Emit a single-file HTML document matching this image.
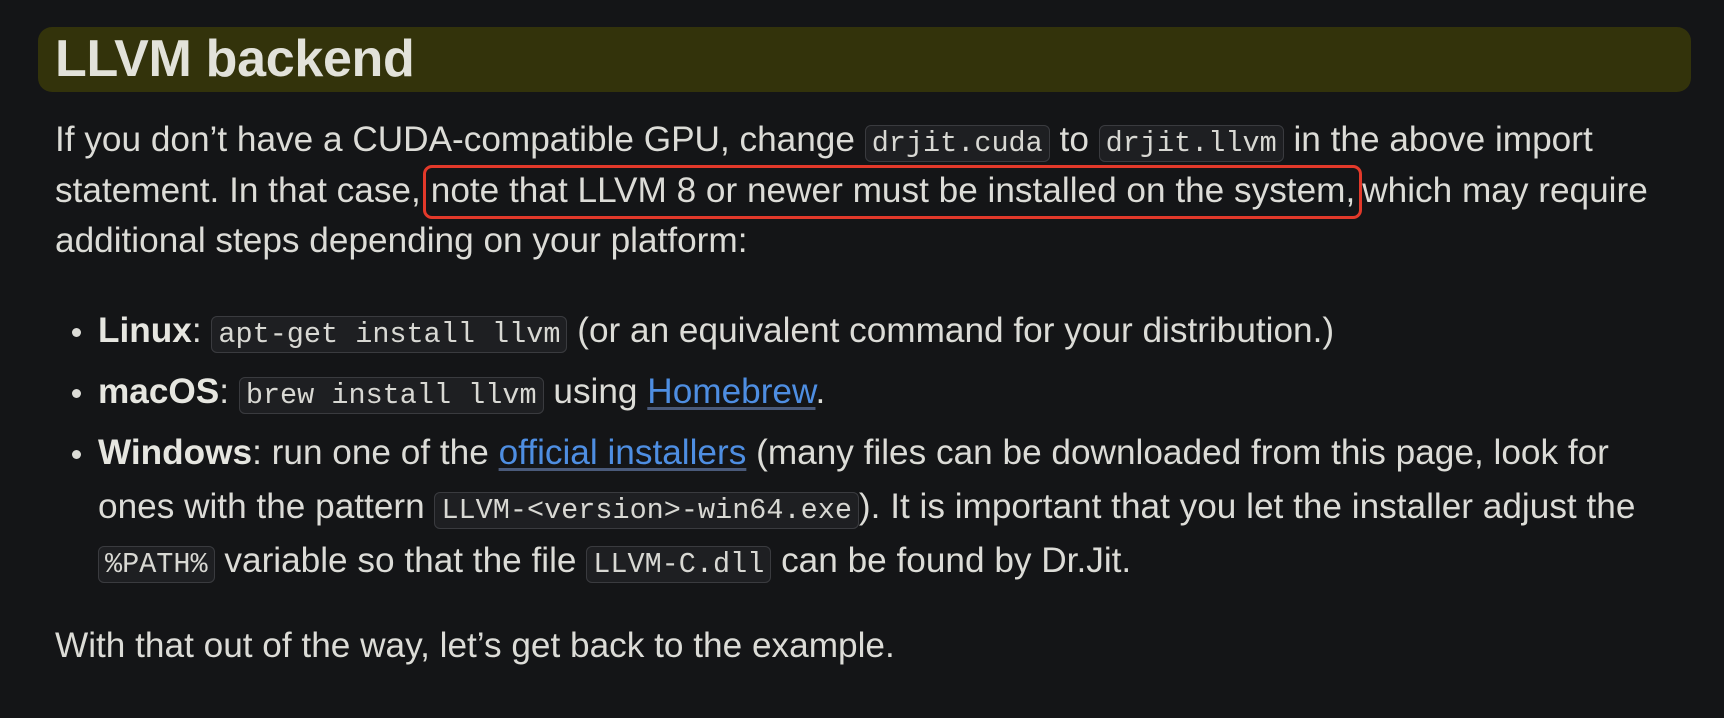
<!DOCTYPE html>
<html><head><meta charset="utf-8"><style>
html,body{margin:0;padding:0;background:#141517;width:1724px;height:718px;overflow:hidden}
body{font-family:"Liberation Sans",sans-serif;color:#dcdcd7;font-size:35.2px;position:relative}
.h{position:absolute;left:38px;top:27px;width:1653px;height:65px;background:#33330b;border-radius:14px}
.h span{position:absolute;left:17px;top:2px;font-size:52px;font-weight:bold;color:#e2e2da;letter-spacing:-0.3px}
.l{position:absolute;white-space:nowrap;line-height:40px}
code{font-family:"Liberation Mono",monospace;font-size:28.5px;background:#1e1f22;border:1.5px solid #3a3b3f;border-radius:6px;padding:1px 6px;color:#d8d8d3}
a{color:#4e8ee2;text-decoration:underline;text-decoration-color:#4a5a7a;text-underline-offset:4px}
b{color:#e6e6e0}
.dot{position:absolute;width:9px;height:9px;border-radius:50%;background:#dcdcd7}
.red{border:3px solid #e3392a;border-radius:9px;padding:3px 4px 6px 5px;margin-left:2px}
</style></head><body>
<div class="h"><span>LLVM backend</span></div>
<div class="l" style="left:55px;top:120px">If you don’t have a CUDA-compatible GPU, change <code>drjit.cuda</code> to <code>drjit.llvm</code> in the above import</div>
<div class="l" style="left:55px;top:171px">statement. In that case,<span class="red">note that LLVM 8 or newer must be installed on the system,</span>which may require</div>
<div class="l" style="left:55px;top:221px">additional steps depending on your platform:</div>
<div class="dot" style="left:72px;top:328px"></div>
<div class="l" style="left:98px;top:311px"><b>Linux</b>: <code>apt-get install llvm</code> (or an equivalent command for your distribution.)</div>
<div class="dot" style="left:72px;top:389px"></div>
<div class="l" style="left:98px;top:372px"><b>macOS</b>: <code>brew install llvm</code> using <a>Homebrew</a>.</div>
<div class="dot" style="left:72px;top:450px"></div>
<div class="l" style="left:98px;top:433px"><b>Windows</b>: run one of the <a>official installers</a> (many files can be downloaded from this page, look for</div>
<div class="l" style="left:98px;top:487px">ones with the pattern <code>LLVM-&lt;version&gt;-win64.exe</code>). It is important that you let the installer adjust the</div>
<div class="l" style="left:98px;top:541px"><code>%PATH%</code> variable so that the file <code>LLVM-C.dll</code> can be found by Dr.Jit.</div>
<div class="l" style="left:55px;top:626px">With that out of the way, let’s get back to the example.</div>
</body></html>
